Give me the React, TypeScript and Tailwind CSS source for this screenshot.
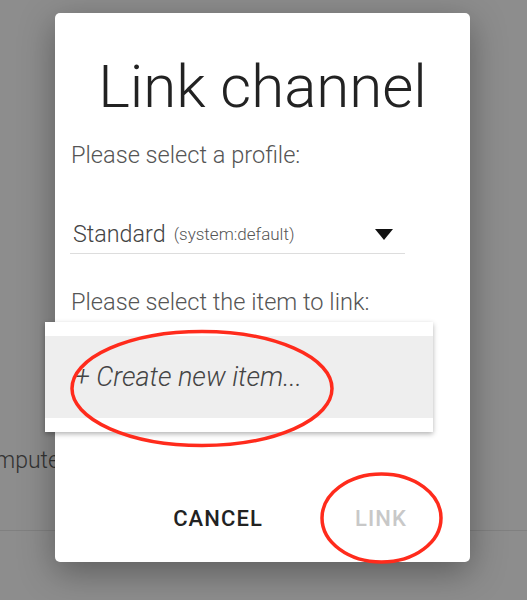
export default function App() {
  return (
    <div className="relative w-[527px] h-[600px] overflow-hidden bg-[#8d8d8d] font-['Roboto',sans-serif]">
      {/* page behind the modal, dimmed */}
      <div className="h-[531px] border-b border-[#808080] pt-[447px]">
        <div className="ml-[-33px] text-[23px] leading-[28px] font-light text-[#333]">Computer</div>
      </div>

      {/* dialog */}
      <div className="absolute left-[55px] top-[13px] w-[415px] h-[549px] bg-white rounded-[5px] shadow-[0_10px_35px_rgba(0,0,0,0.35)] flex flex-col">
        <h1 className="pt-[44px] text-center text-[60px] leading-[60px] font-light text-[#222]">Link channel</h1>

        <p className="mt-[24px] px-[16px] text-[23.6px] leading-[28px] font-light text-[#555]">Please select a profile:</p>

        <div className="mx-[15px] mt-[51px] w-[335px] border-b border-[#ddd] pb-[5px] flex items-center">
          <span className="pl-[3px] text-[23.3px] leading-[28px] font-light text-[#444]">Standard</span>
          <span className="ml-[8px] text-[17px] leading-[28px] font-light text-[#555]">(system:default)</span>
          <svg className="ml-auto mr-[12px]" width="18" height="11" viewBox="0 0 18 11">
            <path d="M0 0 H18 L9 11 Z" fill="#111" />
          </svg>
        </div>

        <p className="mt-[34px] px-[16px] text-[23.6px] leading-[28px] font-light text-[#555]">Please select the item to link:</p>

        <div className="mt-auto pb-[31px] flex justify-end items-center pr-[63px]">
          <button className="text-[22px] leading-[24px] font-medium tracking-[0.05em] text-[#222]">CANCEL</button>
          <button className="ml-[92px] text-[22px] leading-[24px] font-medium tracking-[0.05em] text-[#c8c8c8]">LINK</button>
        </div>

        {/* open select menu */}
        <div className="absolute left-[-10px] top-[309px] w-[388px] bg-white py-[14px] shadow-[0_2px_5px_rgba(0,0,0,0.3)]">
          <div className="h-[82px] bg-[#eeeeee] flex items-center pl-[30px]">
            <span className="text-[27px] leading-[30px] italic font-light text-[#444]">+ Create new item...</span>
          </div>
        </div>
      </div>

      {/* red annotation circles */}
      <svg className="absolute inset-0 pointer-events-none" width="527" height="600" viewBox="0 0 527 600">
        <ellipse cx="202" cy="388.5" rx="130" ry="57" fill="none" stroke="#ff2b1c" strokeWidth="3.5" />
        <ellipse cx="381.5" cy="518" rx="59.5" ry="44" fill="none" stroke="#ff2b1c" strokeWidth="3.5" />
      </svg>
    </div>
  );
}
